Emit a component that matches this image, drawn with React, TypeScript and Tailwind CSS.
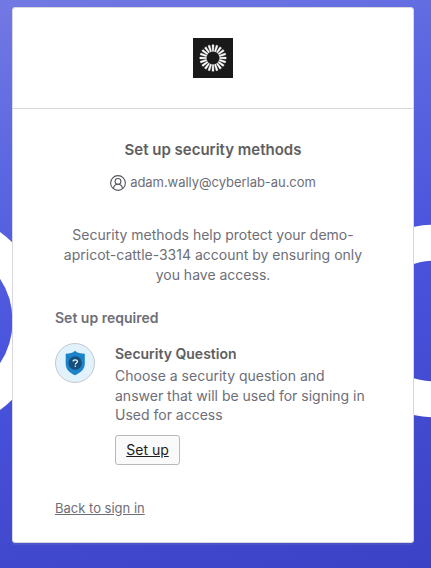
import React from "react";

const rays = Array.from({ length: 20 }, (_, i) => i * 18);

function Logo() {
  return (
    <svg width="40" height="40" viewBox="0 0 40 40" role="img" aria-label="Okta">
      <rect width="40" height="40" fill="#191919" />
      {rays.map((a) => (
        <path key={a} d="M19 6.8H21L20.7 13.4H19.3Z" fill="#fff" stroke="#fff" strokeWidth="0.3" transform={`rotate(${a} 20 20)`} />
      ))}
    </svg>
  );
}

function UserIcon() {
  return (
    <svg width="16" height="16" viewBox="0 0 16 16" fill="none" stroke="#55555e" strokeWidth="1.1">
      <circle cx="8" cy="8" r="7.4" />
      <circle cx="8" cy="6.4" r="2.9" />
      <path d="M3.5 13.7C3.7 10.9 5.2 9.3 8 9.3S12.3 10.9 12.5 13.7" />
    </svg>
  );
}

function ShieldIcon() {
  return (
    <svg width="40" height="40" viewBox="0 0 40 40" className="shrink-0">
      <circle cx="20" cy="20" r="19.5" fill="#e1f2fd" stroke="#c4c8cc" />
      <path d="M20 7.8C22.5 10 25.5 10.7 29.8 10.8V20.5C29.8 26 26 29.5 20 32.2C14 29.5 10.7 26 10.7 20.5V10.8C14.8 10.7 17.6 10 20 7.8Z" fill="#1c82ca" />
      <circle cx="20.2" cy="20" r="6.7" fill="#174f7c" />
      <path d="M18.1 18.5C18.1 16.4 22.4 16.3 22.4 18.5C22.4 20 20.3 19.9 20.3 21.5" fill="none" stroke="#fff" strokeWidth="1.2" />
      <circle cx="20.3" cy="23.3" r="0.8" fill="#fff" />
    </svg>
  );
}

export default function App() {
  return (
    <div className="relative isolate h-[568px] w-[431px] overflow-hidden bg-[linear-gradient(165deg,#7379e3_0%,#5c68e1_24%,#4953dd_53%,#424ad0_78%,#3c42c6_100%)] pl-3 pt-[7px] font-['Inter',sans-serif] text-[#6e6e78]">
      <svg className="absolute inset-0 -z-10" width="431" height="568" fill="none" stroke="#fff">
        <circle cx="-64" cy="321" r="93" strokeWidth="33" />
        <circle cx="434" cy="321" r="78.3" strokeWidth="36" />
      </svg>
      <main className="h-[536px] w-[402px] rounded-[3px] border border-[#d8d8dc] bg-white shadow-[0_2px_0_rgba(175,175,175,0.12)]">
        <header className="flex h-[101px] justify-center border-b border-[#d8d8dc] pt-[30px]">
          <Logo />
        </header>
        <div className="px-[42px] pt-[31px]">
          <h1 className="text-center text-[15px] font-semibold leading-5 text-[#5e5e5e]">Set up security methods</h1>
          <div className="mt-[13px] flex h-5 items-center justify-center gap-1 text-[13px] leading-5">
            <UserIcon />
            <span className="-mt-0.5 tracking-[-0.04px]">adam.wally@cyberlab-au.com</span>
          </div>
          <p className="mt-8 text-center text-[14px] leading-5">
            Security methods help protect your demo-<br />apricot-cattle-3314 account by ensuring only<br />you have access.
          </p>
          <h2 className="mt-[23px] text-[14px] font-semibold leading-5">Set up required</h2>
          <div className="mt-[15px] flex gap-5">
            <ShieldIcon />
            <div className="pt-px">
              <h3 className="text-[14px] font-semibold leading-5 text-[#5e5e5e]">Security Question</h3>
              <p className="mt-0.5 whitespace-nowrap text-[14px] leading-[19.5px]">
                Choose a security question and<br />answer that will be used for signing in<br />Used for access
              </p>
              <button className="mt-2.5 flex h-[30px] w-[65px] items-center justify-center rounded-[3px] border border-[#b8b8b8] bg-[#fafafa] text-[14px] leading-5 text-[#1d1d21] underline">Set up</button>
            </div>
          </div>
          <a className="mt-[33px] block text-[13px] leading-5 underline" href="#">Back to sign in</a>
        </div>
      </main>
    </div>
  );
}
